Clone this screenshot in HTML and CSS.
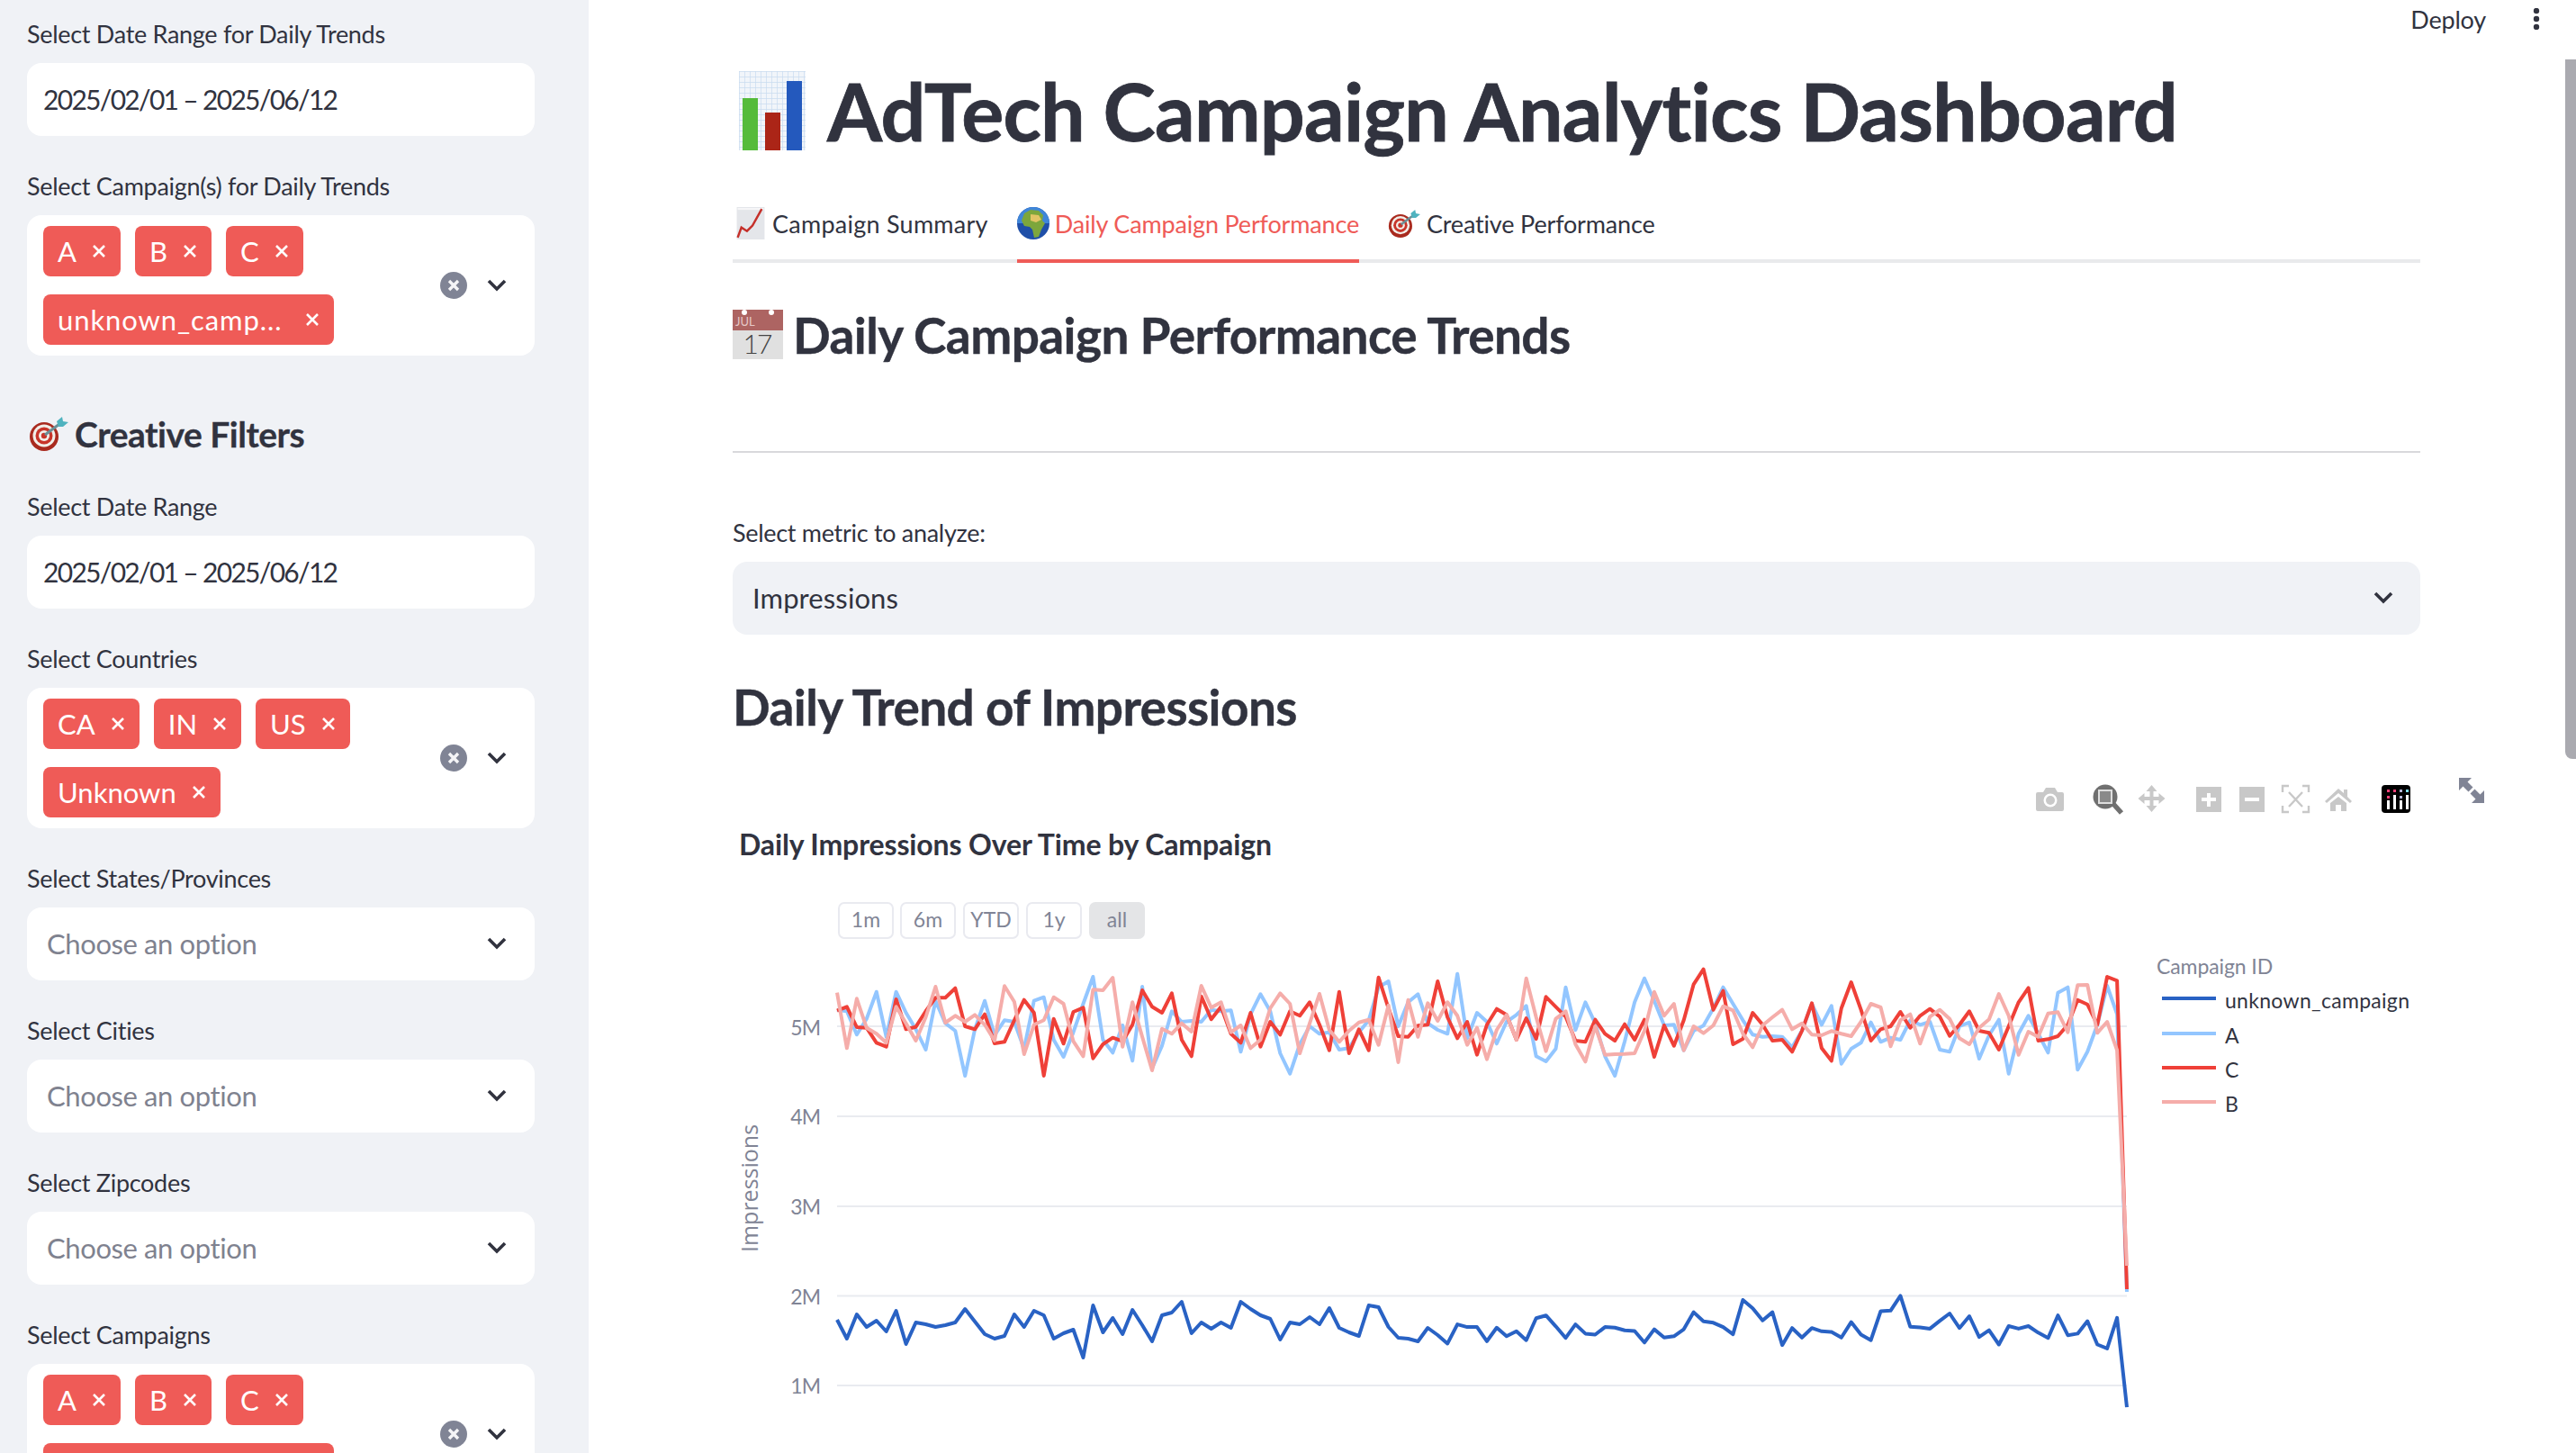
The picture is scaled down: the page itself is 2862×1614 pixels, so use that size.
FILE: index.html
```html
<!DOCTYPE html>
<html lang="en">
<head>
<meta charset="utf-8">
<title>AdTech Campaign Analytics Dashboard</title>
<link rel="stylesheet" href="styles.css">
</head>
<body>
<svg class="defs" width="0" height="0" aria-hidden="true">
  <symbol id="i-x" viewBox="0 0 16 16"><path d="M2 2L14 14M14 2L2 14" fill="none" stroke="#fff" stroke-width="2.6"/></symbol>
  <symbol id="i-clear" viewBox="0 0 30 30"><circle cx="15" cy="15" r="15" fill="#808495"/><path d="M10 10L20 20M20 10L10 20" fill="none" stroke="#f4f4f6" stroke-width="3.4"/></symbol>
  <symbol id="i-chev" viewBox="0 0 24 16"><path d="M3 3L12 12L21 3" fill="none" stroke="#31333f" stroke-width="3.6"/></symbol>
  <symbol id="i-target" viewBox="0 0 44 38">
    <circle cx="17" cy="22" r="16" fill="#a92a1e"/><circle cx="17" cy="21" r="12.5" fill="#f2efe9"/><circle cx="17" cy="21" r="9.5" fill="#c8352a"/><circle cx="17" cy="21" r="6" fill="#f2efe9"/><circle cx="17" cy="21" r="3.2" fill="#c8352a"/>
    <path d="M18 20L34 8" stroke="#6a8f96" stroke-width="3"/><path d="M31 5L37 0L38 5L44 6L38 11L33 11Z" fill="#4fb3bf"/>
  </symbol>
  <symbol id="i-globe" viewBox="0 0 36 36">
    <circle cx="18" cy="18" r="18" fill="#1f4fa8"/><path d="M18 0a18 18 0 0 1 18 18H0A18 18 0 0 1 18 0z" fill="#3f86d9"/>
    <path d="M8 7l7-4 9 1 5 5-1 6 3 3-4 7-3 8-5 1-2-9-3-3-6-1-3-6z" fill="#7da63c"/><path d="M15 8l9 1 3 5-6 3-6-2z" fill="#e2c565"/>
  </symbol>
  <symbol id="i-trend" viewBox="0 0 30 35">
    <rect width="30" height="35" fill="#e4e6ea"/><rect x="1" y="1" width="28" height="2" fill="#f6f6f8"/>
    <path d="M1 33L5 22L11 26L17 20L27 2" fill="none" stroke="#c5302a" stroke-width="2.4"/>
  </symbol>
</svg>

<div class="app">
  <aside class="sidebar">
    <div class="field">
      <label class="label">Select Date Range for Daily Trends</label>
      <div class="input date">2025/02/01 – 2025/06/12</div>
    </div>
    <div class="field">
      <label class="label">Select Campaign(s) for Daily Trends</label>
      <div class="multi">
        <div class="tags">
          <span class="tag">A<svg class="tag-x"><use href="#i-x"/></svg></span>
          <span class="tag">B<svg class="tag-x"><use href="#i-x"/></svg></span>
          <span class="tag">C<svg class="tag-x"><use href="#i-x"/></svg></span>
          <span class="tag tag-long">unknown_camp...<svg class="tag-x"><use href="#i-x"/></svg></span>
        </div>
        <svg class="clear"><use href="#i-clear"/></svg>
        <svg class="chev"><use href="#i-chev"/></svg>
      </div>
    </div>
    <h3 class="side-head"><svg class="side-emoji"><use href="#i-target"/></svg>Creative Filters</h3>
    <div class="field">
      <label class="label">Select Date Range</label>
      <div class="input date">2025/02/01 – 2025/06/12</div>
    </div>
    <div class="field">
      <label class="label">Select Countries</label>
      <div class="multi">
        <div class="tags">
          <span class="tag">CA<svg class="tag-x"><use href="#i-x"/></svg></span>
          <span class="tag">IN<svg class="tag-x"><use href="#i-x"/></svg></span>
          <span class="tag">US<svg class="tag-x"><use href="#i-x"/></svg></span>
          <span class="tag">Unknown<svg class="tag-x"><use href="#i-x"/></svg></span>
        </div>
        <svg class="clear"><use href="#i-clear"/></svg>
        <svg class="chev"><use href="#i-chev"/></svg>
      </div>
    </div>
    <div class="field">
      <label class="label">Select States/Provinces</label>
      <div class="input select placeholder">Choose an option<svg class="chev"><use href="#i-chev"/></svg></div>
    </div>
    <div class="field">
      <label class="label">Select Cities</label>
      <div class="input select placeholder">Choose an option<svg class="chev"><use href="#i-chev"/></svg></div>
    </div>
    <div class="field">
      <label class="label">Select Zipcodes</label>
      <div class="input select placeholder">Choose an option<svg class="chev"><use href="#i-chev"/></svg></div>
    </div>
    <div class="field">
      <label class="label">Select Campaigns</label>
      <div class="multi">
        <div class="tags">
          <span class="tag">A<svg class="tag-x"><use href="#i-x"/></svg></span>
          <span class="tag">B<svg class="tag-x"><use href="#i-x"/></svg></span>
          <span class="tag">C<svg class="tag-x"><use href="#i-x"/></svg></span>
          <span class="tag tag-long">unknown_camp...<svg class="tag-x"><use href="#i-x"/></svg></span>
        </div>
        <svg class="clear"><use href="#i-clear"/></svg>
        <svg class="chev"><use href="#i-chev"/></svg>
      </div>
    </div>
  </aside>

  <main class="main">
    <div class="topbar">
      <span class="deploy">Deploy</span>
      <svg class="dots" width="8" height="24" viewBox="0 0 8 24"><circle cx="4" cy="3" r="3.2"/><circle cx="4" cy="12" r="3.2"/><circle cx="4" cy="21" r="3.2"/></svg>
    </div>
    <div class="scroll-thumb"></div>

    <h1 class="title">
      <svg class="title-emoji" viewBox="0 0 74 88">
        <defs><pattern id="grid" width="6" height="6" patternUnits="userSpaceOnUse"><rect width="6" height="6" fill="#f1f5fa"/><path d="M0 0H6M0 0V6" stroke="#c9dcf0" stroke-width="1.4"/></pattern></defs>
        <rect width="74" height="88" fill="url(#grid)"/>
        <rect x="4" y="30" width="17" height="58" fill="#55bb3a"/><rect x="29" y="46" width="17" height="42" fill="#ab2517"/><rect x="53" y="11" width="17" height="77" fill="#2459bd"/>
      </svg>
      <span class="title-text">AdTech Campaign Analytics Dashboard</span>
    </h1>

    <nav class="tabs">
      <a class="tab tab-wide"><svg class="tab-emoji"><use href="#i-trend"/></svg>Campaign Summary</a>
      <a class="tab tab-active"><svg class="tab-emoji"><use href="#i-globe"/></svg>Daily Campaign Performance</a>
      <a class="tab"><svg class="tab-emoji tab-target"><use href="#i-target"/></svg>Creative Performance</a>
    </nav>

    <h3 class="sub sub-first">
      <svg class="cal" viewBox="0 0 56 55">
        <rect width="56" height="55" fill="#e0e0e0"/><rect width="56" height="23" fill="#ad6462"/>
        <circle cx="13" cy="3" r="3" fill="#fff"/><circle cx="43" cy="3" r="3" fill="#fff"/>
        <text class="cal-month" x="3" y="18">JUL</text><text class="cal-day" x="27" y="49">17</text>
      </svg>Daily Campaign Performance Trends
    </h3>
    <hr class="rule">

    <label class="label metric-label">Select metric to analyze:</label>
    <div class="input select metric">Impressions<svg class="chev"><use href="#i-chev"/></svg></div>

    <h3 class="sub sub-second">Daily Trend of Impressions</h3>

    <svg class="chart" viewBox="814 850 1960 764" width="1960" height="764">
      <g class="modebar">
        <path class="mb" d="M2264 880h6l3-5h10l3 5h5a2 2 0 0 1 2 2v17a2 2 0 0 1-2 2h-27a2 2 0 0 1-2-2v-17a2 2 0 0 1 2-2z"/>
        <circle cx="2278" cy="889" r="7.5" fill="#fff"/><circle class="mb" cx="2278" cy="889" r="5"/>
        <circle cx="2339" cy="885" r="13.5" fill="#707070"/><rect x="2332" y="878" width="14" height="14" fill="#8a8a8a" stroke="#dedede" stroke-width="2"/><path d="M2348 893L2357 903" stroke="#707070" stroke-width="5.5"/>
        <path class="mb" d="M2390.500 872l6 7h-4v6h6v-4l7 6-7 6v-4h-6v6h4l-6 7-6-7h4v-6h-6v4l-7-6 7-6v4h6v-6h-4z"/>
        <path class="mb" fill-rule="evenodd" d="M2440 874h28v28h-28zM2452 881v5h-6v4h6v6h4v-6h6v-4h-6v-5z"/>
        <path class="mb" fill-rule="evenodd" d="M2488 874h28v28h-28zM2494 886v4h16v-4z"/>
        <path class="mb-line" d="M2543 873h-7v7M2558 873h7v7M2536 895v7h7M2565 895v7h-7M2543 880l15 16M2558 880l-15 16"/>
        <path class="mb" d="M2598 876l6 5v-4h4v8l5 5-2 2-13-11-13 11-2-2zM2589 892l9-7 9 7v9h-6v-7h-6v7h-6z"/>
        <rect x="2646" y="872" width="32" height="31" rx="4" fill="#000"/>
        <g fill="#ef3f76"><rect x="2652" y="877" width="3" height="3"/><rect x="2659" y="877" width="3" height="3"/><rect x="2652" y="884" width="3" height="3"/></g>
        <rect x="2666" y="877" width="3" height="3" fill="#b6b6d8"/><rect x="2673" y="877" width="3" height="3" fill="#7fdcec"/><rect x="2666" y="884" width="3" height="3" fill="#b6b6d8"/>
        <g fill="#fff"><rect x="2652" y="889" width="3" height="10"/><rect x="2659" y="883" width="3" height="16"/><rect x="2666" y="889" width="3" height="10"/><rect x="2673" y="883" width="3" height="16"/></g>
        <path fill="#808495" d="M2732 864h14l-4.500 4.500 6 6-5 5-6-6-4.500 4.500zM2760 892h-14l4.500-4.500-6-6 5-5 6 6 4.500-4.500z"/>
      </g>

      <text class="chart-title" x="821" y="950">Daily Impressions Over Time by Campaign</text>

      <g class="rs">
        <rect x="932" y="1003" width="60" height="39" rx="6"/><text x="962" y="1030">1m</text>
        <rect x="1001" y="1003" width="60" height="39" rx="6"/><text x="1031" y="1030">6m</text>
        <rect x="1071" y="1003" width="60" height="39" rx="6"/><text x="1101" y="1030">YTD</text>
        <rect x="1141" y="1003" width="60" height="39" rx="6"/><text x="1171" y="1030">1y</text>
        <rect class="rs-on" x="1211" y="1003" width="60" height="39" rx="6"/><text x="1241" y="1030">all</text>
      </g>

      <g class="gridlines">
        <path d="M930 1140H2363M930 1240H2363M930 1340H2363M930 1439.500H2363M930 1539H2363"/>
      </g>
      <g class="ticks">
        <text x="911" y="1150">5M</text><text x="911" y="1249">4M</text><text x="911" y="1349">3M</text><text x="911" y="1449">2M</text><text x="911" y="1548">1M</text>
      </g>
      <text class="ytitle" transform="translate(842 1320) rotate(-90)">Impressions</text>

      <g id="series"></g>

      <text class="leg-title" x="2396" y="1082">Campaign ID</text>
      <g class="legend">
        <path stroke="#2962c4" d="M2402 1109h60"/><text x="2472" y="1120">unknown_campaign</text>
        <path stroke="#93c6ff" d="M2402 1148h60"/><text x="2472" y="1159">A</text>
        <path stroke="#ef4038" d="M2402 1186h60"/><text x="2472" y="1197">C</text>
        <path stroke="#f5adaa" d="M2402 1224h60"/><text x="2472" y="1235">B</text>
      </g>
    </svg>
  </main>
</div>
<script src="chart.js"></script>
</body>
</html>
```
FILE: styles.css
```css
* { box-sizing: border-box; }
html, body { margin: 0; height: 100%; overflow: hidden; }
body { font-family: "Lato", "Noto Sans", sans-serif; color: #31333f; background: #fff; }
.defs { position: absolute; }

.app { display: flex; width: 2862px; height: 1614px; overflow: hidden; }

/* sidebar */
.sidebar { flex: 0 0 654px; height: 1614px; overflow: hidden; background: #f0f2f6; padding: 14px 60px 0 30px; }
.field { margin-bottom: 32px; }
.label { display: flex; align-items: center; height: 48px; margin-bottom: 8px; padding-bottom: 2px; font-size: 27px; letter-spacing: -.3px; color: #31333f; }
.input { display: flex; align-items: center; height: 81px; background: #fff; border-radius: 16px; padding: 0 20px 2px; font-size: 31px; letter-spacing: -.4px; color: #31333f; }
.date { padding-left: 18px; font-size: 30px; letter-spacing: -1.7px; }
.select { justify-content: space-between; padding: 0 30px 2px 22px; }
.placeholder { color: #7f828f; }
.chev { flex: none; width: 24px; height: 16px; }
.multi { display: flex; align-items: center; background: #fff; border-radius: 16px; padding: 12px 30px 12px 18px; }
.tags { flex: 1; display: flex; flex-wrap: wrap; gap: 20px 16px; }
.tag { display: inline-flex; align-items: center; height: 56px; padding: 0 16px; gap: 17px; background: #ef5b57; color: #fff; border-radius: 8px; font-size: 31px; }
.tag-long { letter-spacing: .9px; gap: 26px; }
.tag-x { width: 16px; height: 16px; }
.clear { flex: none; width: 30px; height: 30px; margin-right: 21px; }

.side-head { display: flex; align-items: center; height: 80px; margin: 0 0 32px; padding-top: 30px; font-size: 39px; font-weight: 700; letter-spacing: -.5px; -webkit-text-stroke: .3px #31333f; }
.side-emoji { width: 44px; height: 38px; margin: 0 7px 0 2px; }

/* main */
.main { position: relative; flex: 1; min-width: 0; overflow: hidden; padding: 60px 173px 0 160px; }
.topbar { position: absolute; top: 3px; right: 40px; display: flex; align-items: center; gap: 52px; height: 36px; }
.deploy { font-size: 27px; letter-spacing: -.2px; }
.dots { fill: #31333f; }
.scroll-thumb { position: absolute; top: 66px; right: 0; width: 12px; height: 777px; background: #aaaab0; border-bottom-left-radius: 8px; }

.title { display: flex; align-items: center; height: 128px; margin: 0; padding-bottom: 3px; font-size: 88px; font-weight: 700; letter-spacing: -.77px; color: #31333f; -webkit-text-stroke: .8px #31333f; }
.title-emoji { flex: none; width: 74px; height: 88px; margin: 0 24px 0 7px; }

.tabs { display: flex; gap: 32px; height: 84px; margin-top: 20px; border-bottom: 4px solid #e9eaec; }
.tab { display: flex; align-items: center; height: 84px; font-size: 27px; letter-spacing: -.17px; color: #31333f; border-bottom: 4px solid transparent; }
.tab-wide { padding-left: 2px; letter-spacing: .25px; }
.tab-active { color: #ef5b57; border-bottom-color: #ef5b57; }
.tab-emoji { width: 36px; height: 36px; margin-right: 6px; }
.tab-target { width: 36px; height: 31px; margin-right: 7px; }

.sub { display: flex; align-items: center; height: 80px; margin: 0; font-size: 55px; font-weight: 700; letter-spacing: -.6px; color: #31333f; -webkit-text-stroke: .4px #31333f; }
.sub-first { margin-top: 41px; padding-bottom: 3px; }
.sub-second { margin-top: 40px; }
.cal { flex: none; width: 56px; height: 55px; margin-right: 11px; }
.cal-month { font-size: 13px; fill: #e6c9c8; stroke: none; -webkit-text-stroke: 0; font-weight: 400; letter-spacing: 0; }
.cal-day { font-size: 30px; font-weight: 300; fill: #444; text-anchor: middle; -webkit-text-stroke: 0; letter-spacing: -2px; }
.rule { height: 2px; border: 0; margin: 88px 0 0; background: #d8d8dc; }
.metric-label { margin-top: 65px; height: 48px; }
.metric { background: #f0f2f6; padding-left: 22px; padding-right: 29px; letter-spacing: .1px; }

.chart { position: absolute; left: 160px; top: 850px; overflow: visible; }
.mb { fill: #c8c8c8; }
.mb-line { fill: none; stroke: #c8c8c8; stroke-width: 2.4; }
.chart-title { font-size: 32px; font-weight: 700; fill: #31333f; letter-spacing: -.13px; }
.rs rect { fill: #fff; stroke: #e9eaf0; stroke-width: 2; }
.rs rect.rs-on { fill: #e4e5e7; stroke: #e4e5e7; }
.rs text { font-size: 23px; fill: #808495; text-anchor: middle; }
.gridlines path { fill: none; stroke: #e9ebf0; stroke-width: 2; }
.ticks text { font-size: 23px; fill: #808495; text-anchor: end; letter-spacing: -1px; }
.ytitle { font-family: "Open Sans", sans-serif; font-size: 25px; fill: #808495; text-anchor: middle; }
.leg-title { font-size: 23px; fill: #808495; letter-spacing: -.1px; }
.legend path { fill: none; stroke-width: 4; }
.legend text { font-size: 23px; fill: #31333f; letter-spacing: .3px; }
.line { fill: none; stroke-width: 4; stroke-linejoin: round; }
```
FILE: chart.js
```js
var C = [158,145,213,215,265,278,120,220,212,160,115,115,83,210,220,170,267,262,190,122,165,375,185,268,162,148,317,270,248,260,205,90,145,
  165,100,255,310,110,187,145,235,265,165,278,195,238,160,175,130,205,290,95,300,220,290,47,150,243,245,208,205,60,180,250,195,305,
  205,152,172,255,183,252,112,145,178,258,262,188,235,258,203,255,188,312,207,275,190,70,20,155,92,270,252,165,205,258,255,295,225,
  133,283,325,150,63,155,258,220,210,162,215,175,152,178,242,205,160,225,232,288,210,130,82,258,253,243,205,122,137,205,45,58,1086];
var A = [155,160,238,185,95,245,95,165,220,288,125,200,225,375,220,125,240,190,195,285,125,113,255,312,230,135,45,255,298,207,325,78,350,
  275,160,195,192,195,155,160,157,295,170,103,160,300,368,270,210,235,230,288,283,230,190,80,60,210,130,103,200,222,235,35,250,165,
  195,268,195,172,142,310,327,285,80,222,130,200,310,375,260,130,50,125,207,205,290,225,208,150,80,135,190,238,245,243,245,280,225,
  135,205,142,335,285,265,197,262,248,255,190,205,195,288,295,210,197,318,240,188,368,235,175,235,298,98,80,355,295,205,75,170,1095];
var B = [98,283,118,215,235,265,145,200,258,180,78,198,175,195,172,205,258,76,128,303,205,190,113,135,260,310,88,90,48,278,130,245,357,
  218,235,200,228,75,148,130,230,207,283,255,150,100,135,300,200,102,222,262,225,197,188,272,140,330,122,245,133,192,130,175,272,215,
  320,222,172,255,50,180,293,185,160,270,328,210,305,303,302,300,225,95,175,135,290,210,233,207,143,157,235,280,207,180,155,220,200,
  238,240,226,235,243,195,135,147,277,190,170,268,178,155,185,250,270,215,187,102,175,305,228,245,167,163,230,73,72,232,195,290,1008];
// Lower series, full pixel rows.
var U = [1466,1487,1460,1474,1467,1479,1456,1493,1469,1471,1474,1472,1469,1454,1468,1482,1487,1484,1460,1474,1456,1461,1487,1481,1477,1508,1450,1480,1464,1482,1455,1472,1490,1461,1458,1446,1481,1469,1476,1469,1475,1446,1454,1461,1465,1488,1469,1471,1463,1471,1453,1475,1480,1484,1450,1452,1474,1486,1487,1490,1475,1483];
var U2 = [1235,1177,1185,1185,1228,1187,1213,1198,1225,1158,1150,1183,1218,1177,1205,1208,1185,1187,1195,1197,1232,1192,1217,1213,1192,1140,1168,1172,1185,1207,1103,1128,1165,1140,1240,1188,1217,1188,1198,1200,1217,1170,1208,1225,1137,1135,1090,1184,1186,1190,1166,1144,1188,1152,1215,1195,1238,1182,1190,1182,1202,1218,1150,1210,1205,1167,1238,1250,1157,1428];

function upper(v) { return 1070 + v / 3; }
function lower(v) { return 1040 + v / 2.73; }

function draw(rows, colour) {
  var pts = rows.map(function (y, i) {
    return (930 + 1433 * i / 131).toFixed(1) + ',' + y.toFixed(1);
  }).join(' ');
  var el = document.createElementNS('http://www.w3.org/2000/svg', 'polyline');
  el.setAttribute('points', pts);
  el.setAttribute('class', 'line');
  el.setAttribute('stroke', colour);
  document.getElementById('series').appendChild(el);
}

draw(U.concat(U2.map(lower)), '#2962c4');
draw(A.map(upper), '#93c6ff');
draw(C.map(upper), '#ef4038');
draw(B.map(upper), '#f5adaa');
```
